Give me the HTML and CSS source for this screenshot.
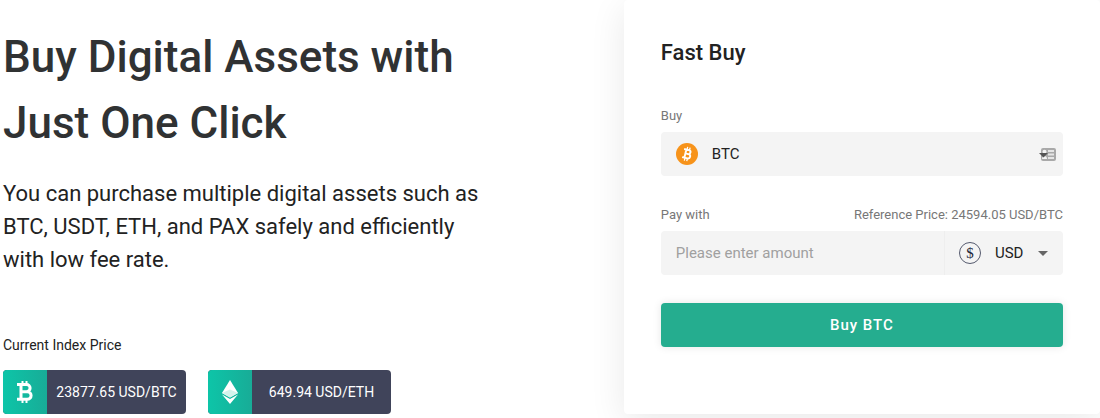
FILE: index.html
```html
<!DOCTYPE html>
<html lang="en">
<head>
  <meta charset="UTF-8" />
  <meta name="viewport" content="width=device-width, initial-scale=1" />
  <title>Fast Buy</title>
  <link rel="stylesheet" href="styles.css">
</head>
<body>

<main class="page">
  <section class="intro">
    <h1>Buy Digital Assets with<br>Just One Click</h1>
    <p class="lead">You can purchase multiple digital assets such as BTC, USDT, ETH, and PAX safely and efficiently with low fee rate.</p>

    <h2 class="index-title">Current Index Price</h2>
    <div class="prices">
      <div class="price">
        <span class="price-icon">
          <svg width="18" height="24" viewBox="0 0 18 24" fill="none" stroke="#fff" aria-hidden="true">
            <path d="M6.500 1v4M10.500 1v4M6.500 19v4M10.500 19v4" stroke-width="2"/>
            <path d="M1 4.500h9.500a3.600 3.600 0 0 1 0 7.200H5M10.500 11.700h.8a3.800 3.800 0 0 1 0 7.600H1M5 4.500v14.800" stroke-width="3"/>
          </svg>
        </span>
        <span class="price-value">23877.65 USD/BTC</span>
      </div>
      <div class="price">
        <span class="price-icon">
          <svg width="16" height="24" viewBox="0 0 16 24" aria-hidden="true">
            <path d="M8 0L0 13l8 4.500L16 13z" fill="#fff"/>
            <path d="M8 9.500L0 13l8 4.500L16 13z" fill="#d3f3ec"/>
            <path d="M0 14.500L8 24l8-9.500-8 4.500z" fill="#fff"/>
          </svg>
        </span>
        <span class="price-value">649.94 USD/ETH</span>
      </div>
    </div>
  </section>

  <form class="card">
    <h2 class="card-title">Fast Buy</h2>

    <div class="label-row">
      <label for="coin">Buy</label>
    </div>
    <div class="field">
      <svg class="coin" width="22" height="22" viewBox="0 0 22 22" aria-hidden="true">
        <circle cx="11" cy="11" r="11" fill="#f7931a"/>
        <g transform="rotate(14 11 11)" fill="none" stroke="#fff">
          <path d="M10 4v3M12.500 4v3M10 15v3M12.500 15v3" stroke-width="1.300"/>
          <path d="M7 6.800h5a2 2 0 0 1 0 4H9.500M12 10.800h.5a2.200 2.200 0 0 1 0 4.400H7M9.300 6.800v8.400" stroke-width="1.900"/>
        </g>
      </svg>
      <select id="coin">
        <option>BTC</option>
        <option>USDT</option>
        <option>ETH</option>
        <option>PAX</option>
      </select>
      <svg class="autofill" width="17" height="13" viewBox="0 0 17 13" aria-hidden="true">
        <rect x="2" y="0" width="15" height="13" rx="2" fill="#a9a9a9"/>
        <path d="M9 2h6v2H9zM9 5.500h6v2H9zM9 9h6v2H9z" fill="#e6e6e6"/>
        <circle cx="5.500" cy="3.800" r="2" fill="#f4f4f4"/>
        <path d="M3 11c0-4 5-4 5 0z" fill="#f4f4f4"/>
        <path d="M0 5h9L4.500 9.500z" fill="#555"/>
      </svg>
    </div>

    <div class="label-row">
      <label for="amount">Pay with</label>
      <span>Reference Price: 24594.05 USD/BTC</span>
    </div>
    <div class="field">
      <input id="amount" type="text" placeholder="Please enter amount">
      <div class="currency">
        <span class="dollar">$</span>
        <select id="currency" aria-label="Currency">
          <option>USD</option>
          <option>EUR</option>
        </select>
        <svg class="arrow" width="10" height="5" viewBox="0 0 10 5" aria-hidden="true">
          <path d="M0 0h10L5 5z" fill="#666"/>
        </svg>
      </div>
    </div>

    <button type="button" class="buy-btn">Buy BTC</button>
  </form>
</main>

</body>
</html>
```
FILE: styles.css
```css
*{
  box-sizing:border-box
}
body{
  margin:0;
  background:#fff;
  color:#222;
  font-family:Roboto,"Liberation Sans",sans-serif;
  font-size:14px;
  line-height:20px
}
h1,h2,p{
  margin:0;
  font-weight:400
}
.page{
  display:grid;
  grid-template-columns:131fr 100fr;
  align-items:start;
  overflow:hidden
}

/* left side */
.intro{
  padding:24px 0 4px 3px
}
h1{
  font-size:44px;
  line-height:66px;
  font-weight:500;
  color:#303233
}
.lead{
  max-width:480px;
  margin-top:21px;
  font-size:22px;
  line-height:33px
}
.index-title{
  margin-top:59px;
  font-size:14px;
  line-height:20px
}
.prices{
  display:flex;
  gap:22px;
  margin-top:15px
}
.price{
  display:flex;
  width:183px;
  height:44px;
  border-radius:4px;
  overflow:hidden;
  background:#40445a;
  color:#fff
}
.price-icon{
  display:flex;
  align-items:center;
  justify-content:center;
  width:44px;
  background:linear-gradient(90deg,#0dc5a8,#18ac97)
}
.price-value{
  flex:1;
  line-height:44px;
  text-align:center;
  white-space:nowrap
}

/* order card */
.card{
  padding:36px 37px 67px;
  border-radius:4px;
  background:#fff;
  box-shadow:0 8px 36px rgba(0,0,0,.09)
}
.card-title{
  margin-bottom:36px;
  font-size:22px;
  line-height:33px;
  font-weight:500
}
.label-row{
  display:flex;
  justify-content:space-between;
  padding-top:1px;
  margin-bottom:6px;
  font-size:13px;
  line-height:20px;
  color:#777
}
.field{
  display:flex;
  align-items:center;
  height:44px;
  margin-bottom:28px;
  border-radius:4px;
  background:#f4f4f4
}
.field select,
.field input{
  height:44px;
  margin:0;
  padding:0;
  border:0;
  outline:0;
  background:none;
  color:#222;
  font:inherit;
  font-size:15px;
  appearance:none
}
.field input{
  flex:1;
  min-width:0;
  padding-left:15px
}
.field input::placeholder{
  color:#a0a0a0
}
.coin{
  margin:0 14px 0 15px
}
#coin{
  flex:1
}
.autofill{
  margin-right:7px
}
.currency{
  display:flex;
  align-items:center;
  width:119px;
  height:44px;
  padding:0 15px 0 14px;
  border-left:1px solid #eee
}
.dollar{
  width:22px;
  height:22px;
  margin-right:14px;
  border:1px solid #555a6e;
  border-radius:50%;
  font-family:"Liberation Serif",serif;
  font-size:15px;
  line-height:20px;
  text-align:center;
  color:#22263a
}
#currency{
  flex:1
}
.buy-btn{
  display:block;
  width:100%;
  height:44px;
  border:0;
  border-radius:4px;
  background:#25ad8f;
  box-shadow:0 0 8px rgba(0,0,0,.1);
  color:#fff;
  font:inherit;
  font-size:15px;
  font-weight:500;
  letter-spacing:1px;
  cursor:pointer
}
```
